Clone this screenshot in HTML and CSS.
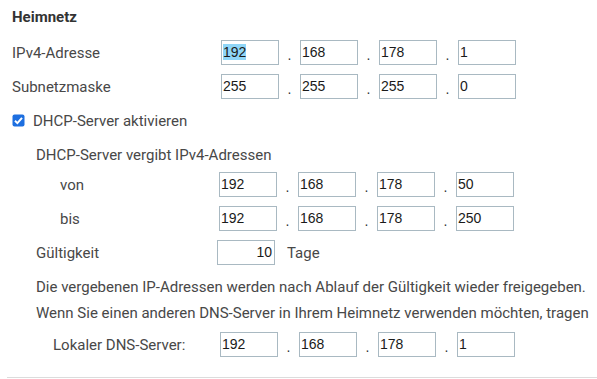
FILE: index.html
```html
<!DOCTYPE html>
<html lang="de">
<head>
	<meta charset="UTF-8">
	<meta name="viewport" content="width=device-width, initial-scale=1.0">
	<title>Heimnetz</title>
	<link rel="stylesheet" href="styles.css">
</head>
<body>
	<section class="net">
		<h2 class="net__title">Heimnetz</h2>

		<div class="row row--first">
			<span class="label label--main">IPv4-Adresse</span>
			<div class="ip">
				<span class="ip__box"><span class="ip__sel">192</span></span><span class="ip__dot">.</span>
				<span class="ip__box">168</span><span class="ip__dot">.</span>
				<span class="ip__box">178</span><span class="ip__dot">.</span>
				<span class="ip__box">1</span>
			</div>
		</div>

		<div class="row">
			<span class="label label--main">Subnetzmaske</span>
			<div class="ip">
				<span class="ip__box">255</span><span class="ip__dot">.</span>
				<span class="ip__box">255</span><span class="ip__dot">.</span>
				<span class="ip__box">255</span><span class="ip__dot">.</span>
				<span class="ip__box">0</span>
			</div>
		</div>

		<div class="row">
			<label class="check">
				<svg class="check__box" width="13" height="13" viewBox="0 0 13 13">
					<rect x="0.5" y="0.5" width="12" height="12" rx="2" fill="#1d6fe0"/>
					<path d="M3 6.8 L5.4 9.1 L10 3.9" fill="none" stroke="#fff" stroke-width="2"/>
				</svg>
				DHCP-Server aktivieren
			</label>
		</div>

		<div class="row row--sub">
			<span class="text">DHCP-Server vergibt IPv4-Adressen</span>
		</div>

		<div class="row row--range">
			<span class="label label--range">von</span>
			<div class="ip">
				<span class="ip__box">192</span><span class="ip__dot">.</span>
				<span class="ip__box">168</span><span class="ip__dot">.</span>
				<span class="ip__box">178</span><span class="ip__dot">.</span>
				<span class="ip__box">50</span>
			</div>
		</div>

		<div class="row">
			<span class="label label--range">bis</span>
			<div class="ip">
				<span class="ip__box">192</span><span class="ip__dot">.</span>
				<span class="ip__box">168</span><span class="ip__dot">.</span>
				<span class="ip__box">178</span><span class="ip__dot">.</span>
				<span class="ip__box">250</span>
			</div>
		</div>

		<div class="row row--sub">
			<span class="label label--lease">Gültigkeit</span>
			<span class="ip__box ip__box--num">10</span>
			<span class="unit">Tage</span>
		</div>

		<div class="row row--sub">
			<span class="text">Die vergebenen IP-Adressen werden nach Ablauf der Gültigkeit wieder freigegeben.</span>
		</div>

		<div class="row row--sub row--tight">
			<span class="text">Wenn Sie einen anderen DNS-Server in Ihrem Heimnetz verwenden möchten, tragen</span>
		</div>

		<div class="row row--dns">
			<span class="label label--dns">Lokaler DNS-Server:</span>
			<div class="ip">
				<span class="ip__box">192</span><span class="ip__dot">.</span>
				<span class="ip__box">168</span><span class="ip__dot">.</span>
				<span class="ip__box">178</span><span class="ip__dot">.</span>
				<span class="ip__box">1</span>
			</div>
		</div>
	</section>
</body>
</html>
```
FILE: styles.css
```css
*{
	box-sizing: border-box;
}
body{
	margin: 0;
	font-family: Roboto, "Liberation Sans", sans-serif;
	font-size: 15px;
	color: #484848;
	background: #fff;
	overflow: hidden;
}
.net{
	padding: 0 0 0 12px;
	margin-left: 0;
}
.net__title{
	margin: 0;
	padding-top: 7px;
	font-size: 15px;
	line-height: 20px;
	font-weight: bold;
	color: #333;
}
.row{
	display: flex;
	align-items: center;
	height: 25px;
	margin-top: 9px;
	white-space: nowrap;
}
.row--first{
	margin-top: 13px;
}
.row--sub{
	padding-left: 24px;
}
.row--range{
	margin-top: 5px;
}
.row--tight{
	margin-top: 1px;
}
.row--dns{
	margin-top: 7px;
	padding-bottom: 0;
}
.label--main{
	width: 209px;
}
.label--range{
	width: 159px;
	margin-left: 48px;
}
.label--lease{
	width: 181px;
}
.label--dns{
	width: 167px;
	margin-left: 41px;
}
.ip{
	display: flex;
	align-items: center;
}
.ip__box{
	display: inline-block;
	width: 58px;
	height: 25px;
	border: 1px solid #a9b9c2;
	padding: 0 1px;
	font-family: "Liberation Sans", Arial, sans-serif;
	font-size: 14px;
	line-height: 23px;
	color: #1a1a1a;
	background: #fff;
}
.ip__box--num{
	text-align: right;
	padding-right: 2px;
}
.ip__sel{
	background: #8fd6f8;
}
.ip__dot{
	display: inline-block;
	width: 21px;
	text-align: center;
	font-family: "Liberation Sans", Arial, sans-serif;
	font-size: 14px;
	color: #333;
	padding-top: 4px;
}
.unit{
	margin-left: 12px;
}
.check{
	display: flex;
	align-items: center;
	gap: 8px;
}
.check__box{
	display: block;
}
.net::after{
	content: "";
	display: block;
	margin: 20px 0 0 -5px;
	border-top: 1px solid #dcdcdc;
}
```
